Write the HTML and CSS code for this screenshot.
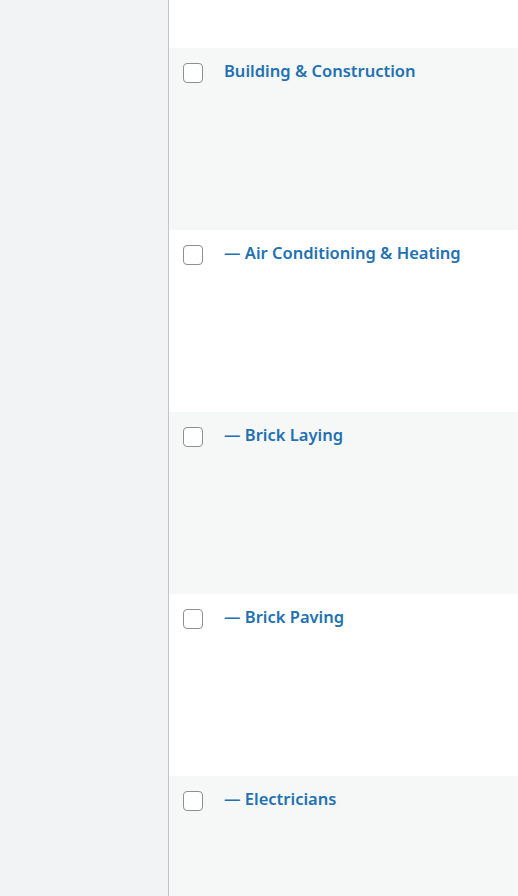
FILE: index.html
```html
<!DOCTYPE html>
<html lang="en">
<head>
    <meta charset="UTF-8">
    <meta name="viewport" content="width=device-width, initial-scale=1.0">
    <title>Categories</title>
    <link rel="stylesheet" href="styles.css">
</head>
<body>

<div class="wrap">
    <!-- 왼쪽 회색 영역 -->
    <div class="side"></div>

    <!-- 카테고리 목록 -->
    <div class="list">
        <div class="list-head"></div>

        <div class="row alt">
            <span class="check"><input type="checkbox" /></span>
            <a href="#" class="row-title">Building &amp; Construction</a>
        </div>
        <div class="row">
            <span class="check"><input type="checkbox" /></span>
            <a href="#" class="row-title">— Air Conditioning &amp; Heating</a>
        </div>
        <div class="row alt">
            <span class="check"><input type="checkbox" /></span>
            <a href="#" class="row-title">— Brick Laying</a>
        </div>
        <div class="row">
            <span class="check"><input type="checkbox" /></span>
            <a href="#" class="row-title">— Brick Paving</a>
        </div>
        <div class="row alt">
            <span class="check"><input type="checkbox" /></span>
            <a href="#" class="row-title">— Electricians</a>
        </div>
    </div>
</div>

</body>
</html>
```

FILE: styles.css
```css
body {
    margin: 0;
    padding: 0;
    font-family: "Noto Sans", Arial, sans-serif;
    background-color: #f2f3f4;
    height: 100vh;
    overflow: hidden;
}

.wrap {
    display: flex;
    height: 100%;
}

.side {
    width: 168px;
    flex-shrink: 0;
    background-color: #f2f3f4;
    border-right: 1px solid #c3c4c7;
}

.list {
    flex-grow: 1;
    background-color: #fff;
}

.list-head {
    height: 48px;
}

.row {
    display: flex;
    align-items: flex-start;
    height: 182px;
    box-sizing: border-box;
    padding-top: 12px;
    background-color: #fff;
}

.row.alt {
    background-color: #f6f7f7;
}

.check {
    width: 55px;
    flex-shrink: 0;
    padding-left: 14px;
    box-sizing: border-box;
}

.check input {
    appearance: none;
    -webkit-appearance: none;
    display: block;
    width: 20px;
    height: 20px;
    margin: 3px 0 0 0;
    border: 1px solid #8c8f94;
    border-radius: 4px;
    background-color: #fff;
    box-sizing: border-box;
}

.row-title {
    color: #2271b1;
    font-size: 16.5px;
    font-weight: 600;
    line-height: 22px;
    text-decoration: none;
}
```
